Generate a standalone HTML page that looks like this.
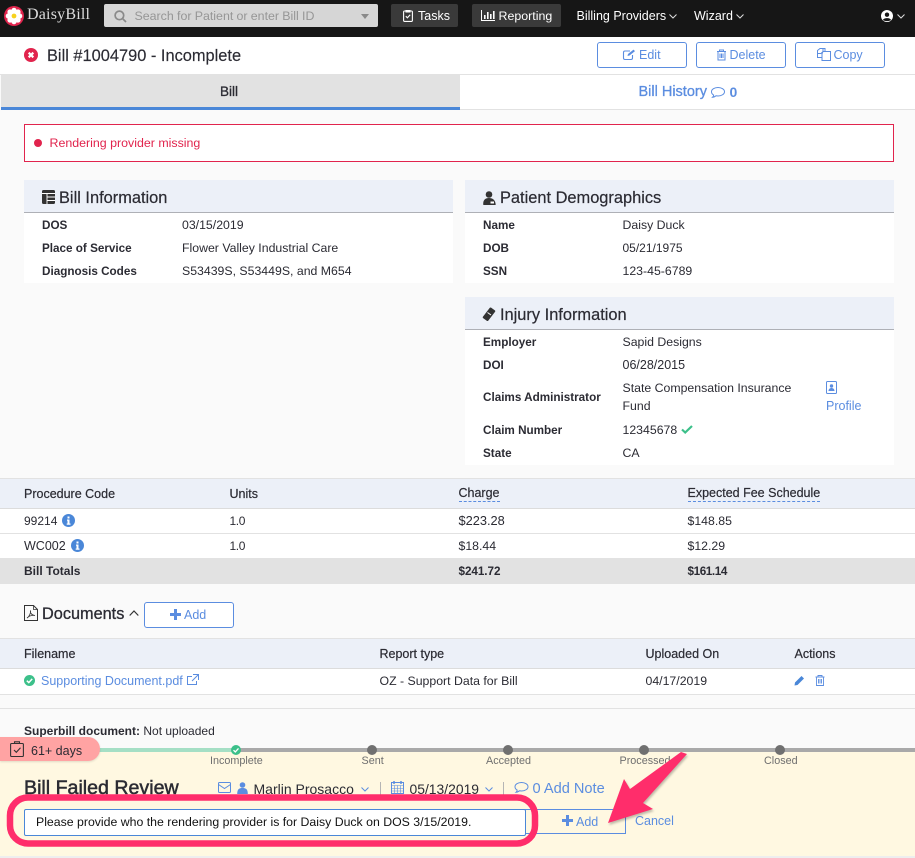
<!DOCTYPE html>
<html><head><meta charset="utf-8"><style>
html,body{margin:0;padding:0}
body{width:915px;height:858px;position:relative;overflow:hidden;background:#fafafa;font-family:"Liberation Sans",sans-serif;font-size:12.3px;color:#2b2b33}
.t{position:absolute;white-space:nowrap;line-height:16px}
.b{position:absolute}
.l{color:#5b8de0}
.btn{position:absolute;border:1px solid #5b8de0;border-radius:3px;box-sizing:border-box;color:#5b8de0;text-align:center;background:#fff}
svg{position:absolute;overflow:visible}
.h{font-size:16.4px;color:#2b2b33;-webkit-text-stroke:.2px #2b2b33}
.lb{font-weight:bold;font-size:11.7px;color:#2b2b33;margin-top:1px}
.th{font-size:12.5px;-webkit-text-stroke:.2px #2b2b33}
.st{font-size:10.8px;color:#6f6f6f}
</style></head><body>

<div class="b" style="left:0;top:0;width:915px;height:37px;background:#161616"></div>
<svg style="left:4px;top:6px" width="20" height="20" viewBox="0 0 20 20"><circle cx="10" cy="10" r="10" fill="#e1244d"/><g fill="#fff"><circle cx="10" cy="4.300" r="2.600"/><circle cx="14" cy="6" r="2.600"/><circle cx="15.700" cy="10" r="2.600"/><circle cx="14" cy="14" r="2.600"/><circle cx="10" cy="15.700" r="2.600"/><circle cx="6" cy="14" r="2.600"/><circle cx="4.300" cy="10" r="2.600"/><circle cx="6" cy="6" r="2.600"/><circle cx="10" cy="10" r="4"/></g><circle cx="10" cy="10" r="2.400" fill="#f7d21e"/></svg>
<div class="t" style="left:27px;top:7px;font-family:'Liberation Serif',serif;font-size:16px;color:#ddd;letter-spacing:.2px">DaisyBill</div>
<div class="b" style="left:104px;top:4px;width:274px;height:23px;background:#d6d6d6;border-radius:2px"></div>
<svg style="left:114px;top:10px" width="13" height="13" viewBox="0 0 13 13" fill="none" stroke="#8a8a8a" stroke-width="1.7"><circle cx="5.400" cy="5.400" r="4.300"/><path d="M8.500 8.500L12 12"/></svg>
<div class="t" style="left:134.500px;top:8px;color:#969696;font-size:12.400px;word-spacing:-.2px">Search for Patient or enter Bill ID</div>
<svg style="left:361px;top:14px" width="8" height="5"><path d="M0 0H8L4 5Z" fill="#8a8a8a"/></svg>
<div class="b" style="left:391px;top:4px;width:67px;height:23px;background:#3a3a3a;border-radius:2px"></div>
<svg style="left:403px;top:9px" width="10" height="13" viewBox="0 0 10 13" fill="none" stroke="#fff" stroke-width="1.100"><rect x=".6" y="2" width="8.800" height="10.400" rx="1"/><path d="M3 1.500h4v1.500h-4zM2.800 7.200l1.600 1.600 2.800-3"/></svg>
<div class="t" style="left:418px;top:8px;color:#fff;font-size:12.500px">Tasks</div>
<div class="b" style="left:472px;top:4px;width:89px;height:23px;background:#3a3a3a;border-radius:2px"></div>
<svg style="left:481px;top:10px" width="14" height="11" viewBox="0 0 14 11" fill="#fff"><path d="M0 0h1v10h13v1H0zM3 5h1.600v4H3zM6 2h1.600v7H6zM9 4h1.600v5H9zM12 1h1.600v8H12z"/></svg>
<div class="t" style="left:498.500px;top:8px;color:#fff;font-size:12.400px">Reporting</div>
<div class="t" style="left:576.500px;top:8px;color:#fff;font-size:12.500px">Billing Providers</div>
<svg style="left:669px;top:14px" width="8" height="5" fill="none" stroke="#ddd"><path d="M.5.500L4 4 7.500.500"/></svg>
<div class="t" style="left:694px;top:8px;color:#fff;font-size:12.500px">Wizard</div>
<svg style="left:736px;top:14px" width="8" height="5" fill="none" stroke="#ddd"><path d="M.5.500L4 4 7.500.500"/></svg>
<svg style="left:881px;top:10px" width="12" height="12" viewBox="0 0 12 12"><circle cx="6" cy="6" r="6" fill="#fff"/><circle cx="6" cy="4.700" r="2.200" fill="#161616"/><path d="M2 10c.7-2.500 7.300-2.500 8 0-2 1.500-6 1.500-8 0z" fill="#161616"/></svg>
<svg style="left:897px;top:14px" width="8" height="5" fill="none" stroke="#ddd"><path d="M.5.500L4 4 7.500.500"/></svg>

<div class="b" style="left:0;top:37px;width:915px;height:37px;background:#fff;border-bottom:1px solid #e2e2e2"></div>
<svg style="left:24px;top:48px" width="14" height="14" viewBox="0 0 14 14"><circle cx="7" cy="7" r="7" fill="#e1244d"/><path d="M4.700 4.700l4.600 4.600M9.300 4.700l-4.600 4.600" stroke="#fff" stroke-width="2.200"/></svg>
<div class="t" style="left:47px;top:48px;font-size:16.400px;color:#2b2b33;-webkit-text-stroke:.15px #2b2b33">Bill #1004790 - Incomplete</div>
<div class="btn" style="left:597px;top:42px;width:90px;height:26px"></div>
<div class="btn" style="left:696px;top:42px;width:90px;height:26px"></div>
<div class="btn" style="left:795px;top:42px;width:90px;height:26px"></div>
<svg style="left:623px;top:49px" width="13" height="11" viewBox="0 0 13 11" fill="none" stroke="#5b8de0" stroke-width="1.100"><path d="M9.500 6v3a1.500 1.500 0 0 1-1.500 1.500H2A1.500 1.500 0 0 1 .5 9V3.500A1.500 1.500 0 0 1 2 2h5"/><path d="M4.500 7l.5-2L10.500.6l1.500 1.500L6.500 6.500z" fill="#5b8de0" stroke="none"/></svg>
<div class="t" style="left:639px;top:47px;color:#5b8de0;font-size:12.500px">Edit</div>
<svg style="left:716px;top:49px" width="11" height="12" viewBox="0 0 11 12" fill="none" stroke="#5b8de0"><path d="M1 2.500h9M3.500 2.500V1h4v1.500M2 2.500v8.500h7V2.500M4 4.500V9M5.500 4.500V9M7 4.500V9"/></svg>
<div class="t" style="left:729.500px;top:47px;color:#5b8de0;font-size:12.500px">Delete</div>
<svg style="left:817px;top:48px" width="14" height="13" viewBox="0 0 14 13" fill="none" stroke="#5b8de0"><path d="M.5 2.500L3 .5h3v3l-2 2H.5zM.5 5.500V9.500h4M6 .5h2v3"/><path d="M6 3.500h7.500v9H5V6z"/></svg>
<div class="t" style="left:833.500px;top:47px;color:#5b8de0;font-size:12.500px">Copy</div>

<div class="b" style="left:1px;top:75px;width:459px;height:32px;background:#e2e2e2"></div>
<div class="b" style="left:1px;top:107px;width:459px;height:3px;background:#4a87d8"></div>
<div class="b" style="left:460px;top:75px;width:455px;height:34px;background:#fff;border-bottom:1px solid #e2e2e2"></div>
<div class="t" style="left:220px;top:84px;font-size:13.500px;-webkit-text-stroke:.3px #2b2b33">Bill</div>
<div class="t" style="left:638.500px;top:84px;font-size:14.500px;color:#5b8de0;-webkit-text-stroke:.3px #5b8de0">Bill History</div>
<svg style="left:711px;top:87px" width="14" height="12" viewBox="0 0 14 12" fill="none" stroke="#5b8de0"><path d="M7 .5c3.500 0 6.500 1.800 6.500 4.200S10.500 9 7 9c-.8 0-1.500-.1-2-.2-1 .8-2 1.300-3.500 1.500.7-.7 1.100-1.400 1.200-2.200C1.400 7.300.5 6.100.5 4.700.5 2.300 3.500.5 7 .5z"/></svg>
<div class="t" style="left:729.500px;top:84px;font-size:14px;color:#5b8de0;font-weight:bold">0</div>

<div class="b" style="left:24px;top:124px;width:870px;height:38px;box-sizing:border-box;background:#fff;border:1px solid #e1244d"></div>
<div class="b" style="left:34px;top:139px;width:8px;height:8px;border-radius:50%;background:#e1244d"></div>
<div class="t" style="left:49.500px;top:135px;color:#e1244d;font-size:12.400px">Rendering provider missing</div>

<div class="b" style="left:24px;top:180px;width:429px;height:103px;background:#fff"></div>
<div class="b" style="left:24px;top:180px;width:429px;height:33px;background:#ecf0f8;border-bottom:1px solid #aeb0b6;box-sizing:border-box"></div>
<svg style="left:41.500px;top:190px" width="14" height="14" viewBox="0 0 14 14"><rect width="13" height="14" rx="1.500" fill="#333"/><path d="M0 3.500h13M5 3.500V14M5 7h8M5 10.500h8" stroke="#fff" stroke-width=".9"/></svg>
<div class="t h" style="left:59px;top:190px">Bill Information</div>
<div class="t lb" style="left:42px;top:217px">DOS</div><div class="t" style="left:182px;top:217px">03/15/2019</div>
<div class="t lb" style="left:42px;top:240px">Place of Service</div><div class="t" style="left:182px;top:240px">Flower Valley Industrial Care</div>
<div class="t lb" style="left:42px;top:263px">Diagnosis Codes</div><div class="t" style="left:182px;top:263px">S53439S, S53449S, and M654</div>

<div class="b" style="left:465px;top:180px;width:429px;height:103px;background:#fff"></div>
<div class="b" style="left:465px;top:180px;width:429px;height:33px;box-sizing:border-box;background:#ecf0f8;border-bottom:1px solid #aeb0b6"></div>
<svg style="left:483px;top:191px" width="13" height="14" viewBox="0 0 13 14" fill="#333"><circle cx="6" cy="3.500" r="3.300"/><path d="M.3 14c-.6-5 2-7 5.700-7s6.500 2 6.700 7z"/><path d="M7.500 10.500h3.500v2h-3.500z" fill="#fff"/></svg>
<div class="t h" style="left:500px;top:190px">Patient Demographics</div>
<div class="t lb" style="left:483px;top:217px">Name</div><div class="t" style="left:622.500px;top:217px">Daisy Duck</div>
<div class="t lb" style="left:483px;top:240px">DOB</div><div class="t" style="left:622.500px;top:240px;font-size:12px">05/21/1975</div>
<div class="t lb" style="left:483px;top:263px">SSN</div><div class="t" style="left:622.500px;top:263px">123-45-6789</div>

<div class="b" style="left:465px;top:297px;width:429px;height:168px;background:#fff"></div>
<div class="b" style="left:465px;top:297px;width:429px;height:33px;box-sizing:border-box;background:#ecf0f8;border-bottom:1px solid #aeb0b6"></div>
<svg style="left:482px;top:307px" width="14" height="15" viewBox="0 0 14 15"><path d="M8.500 1.500l3.800 2.700L5.500 13 1.700 10.300z" fill="#333" stroke="#333" stroke-width="2" stroke-linejoin="round"/><path d="M5.500 5.500l3.500 2.500" stroke="#fff"/></svg>
<div class="t h" style="left:500px;top:307px">Injury Information</div>
<div class="t lb" style="left:483px;top:334px">Employer</div><div class="t" style="left:622.500px;top:334px">Sapid Designs</div>
<div class="t lb" style="left:483px;top:357px">DOI</div><div class="t" style="left:622.500px;top:357px;font-size:12.500px">06/28/2015</div>
<div class="t lb" style="left:483px;top:389px">Claims Administrator</div><div class="t" style="left:622.500px;top:380px">State Compensation Insurance</div><div class="t" style="left:622.500px;top:398px">Fund</div>
<svg style="left:826px;top:381px" width="12" height="13" viewBox="0 0 12 13"><rect x=".5" y=".5" width="10" height="12" rx="1" fill="#fff" stroke="#5b8de0"/><circle cx="5.500" cy="5" r="1.700" fill="#5b8de0"/><path d="M2.500 10c0-4 6-4 6 0z" fill="#5b8de0"/></svg>
<div class="t l" style="left:826px;top:398px;font-size:12.500px">Profile</div>
<div class="t lb" style="left:483px;top:422px">Claim Number</div><div class="t" style="left:622.500px;top:422px">12345678</div>
<svg style="left:681px;top:425px" width="12" height="9" viewBox="0 0 12 9"><path d="M1 4.500l3.200 3L11 1" fill="none" stroke="#3cc08a" stroke-width="2.200"/></svg>
<div class="t lb" style="left:483px;top:445px">State</div><div class="t" style="left:622.500px;top:445px">CA</div>

<div class="b" style="left:0;top:478px;width:915px;height:31px;box-sizing:border-box;background:#ecf0f8;border-top:1px solid #e2e2e2;border-bottom:1px solid #dcdcdc"></div>
<div class="t th" style="left:24px;top:486px">Procedure Code</div>
<div class="t th" style="left:229.500px;top:486px">Units</div>
<div class="t th" style="left:458.500px;top:486px;border-bottom:1px dashed #5b8de0;line-height:15px">Charge</div>
<div class="t th" style="left:687.500px;top:486px;border-bottom:1px dashed #5b8de0;line-height:15px">Expected Fee Schedule</div>
<div class="b" style="left:0;top:509px;width:915px;height:49px;background:#fff"></div>
<div class="b" style="left:0;top:533px;width:915px;height:1px;background:#e2e2e2"></div>
<div class="t" style="left:24px;top:513px;font-size:12px">99214</div>
<svg style="left:62px;top:514px" width="13" height="13" viewBox="0 0 13 13"><circle cx="6.500" cy="6.500" r="6.500" fill="#4a87d8"/><path d="M5.500 2.500h2v2h-2zM5 5.500h2.500v4h1v1.200H4.700V9.500h.8V6.700H5z" fill="#fff"/></svg>
<div class="t" style="left:229.500px;top:513px;font-size:12px;letter-spacing:-.4px">1.0</div><div class="t" style="left:458.500px;top:513px;font-size:12.800px">$223.28</div><div class="t" style="left:687.500px;top:513px">$148.85</div>
<div class="t" style="left:24px;top:538px;font-size:12.500px">WC002</div>
<svg style="left:70.500px;top:539px" width="13" height="13" viewBox="0 0 13 13"><circle cx="6.500" cy="6.500" r="6.500" fill="#4a87d8"/><path d="M5.500 2.500h2v2h-2zM5 5.500h2.500v4h1v1.200H4.700V9.500h.8V6.700H5z" fill="#fff"/></svg>
<div class="t" style="left:229.500px;top:538px;font-size:12px;letter-spacing:-.4px">1.0</div><div class="t" style="left:458.500px;top:538px">$18.44</div><div class="t" style="left:687.500px;top:538px">$12.29</div>
<div class="b" style="left:0;top:558px;width:915px;height:26px;background:#e2e2e2"></div>
<div class="t lb" style="left:24px;top:563px;font-size:12px;margin-top:0">Bill Totals</div>
<div class="t lb" style="left:458.500px;top:563px;letter-spacing:-.05px">$241.72</div>
<div class="t lb" style="left:687.500px;top:563px;letter-spacing:-.4px">$161.14</div>

<svg style="left:24px;top:605px" width="14" height="16" viewBox="0 0 14 16" fill="none" stroke="#333"><path d="M.5.500h9l4 4v11H.5z"/><path d="M9.500.5v4h4M3 13c2-1 4-5 3.500-7.500C6 8 8 10.500 11 10.500 8 10 5 11 3 13z" stroke-width=".8"/></svg>
<div class="t" style="left:42px;top:606px;font-size:16.300px;-webkit-text-stroke:.3px #2b2b33">Documents</div>
<svg style="left:129px;top:610px" width="10" height="6" fill="none" stroke="#333" stroke-width="1.200"><path d="M.7 5.500L5 1l4.300 4.500"/></svg>
<div class="btn" style="left:144px;top:602px;width:90px;height:26px"></div>
<svg style="left:170px;top:609px" width="11" height="11"><path d="M4 0h3v4h4v3H7v4H4V7H0V4h4z" fill="#5b8de0"/></svg>
<div class="t" style="left:184px;top:607px;color:#5b8de0;font-size:12.500px">Add</div>

<div class="b" style="left:0;top:638px;width:915px;height:31px;box-sizing:border-box;background:#ecf0f8;border-top:1px solid #e2e2e2;border-bottom:1px solid #dcdcdc"></div>
<div class="t th" style="left:24px;top:646px">Filename</div>
<div class="t th" style="left:379.500px;top:646px">Report type</div>
<div class="t th" style="left:645.500px;top:646px">Uploaded On</div>
<div class="t th" style="left:794.500px;top:646px">Actions</div>
<div class="b" style="left:0;top:669px;width:915px;height:25px;background:#fff;border-bottom:1px solid #e2e2e2"></div>
<div class="b" style="left:0;top:708px;width:915px;height:1px;background:#e2e2e2"></div>
<svg style="left:24px;top:675px" width="11" height="11" viewBox="0 0 11 11"><circle cx="5.500" cy="5.500" r="5.500" fill="#3cc08a"/><path d="M2.800 5.700l2 1.900 3.400-3.700" fill="none" stroke="#fff" stroke-width="1.500"/></svg>
<div class="t l" style="left:41px;top:673px;font-size:12.500px">Supporting Document.pdf</div>
<svg style="left:187px;top:674px" width="12" height="12" viewBox="0 0 12 12" fill="none" stroke="#5b8de0"><path d="M9.500 7v3.500h-9v-8H5M6 .5h5.500V6M11 1L5 7"/></svg>
<div class="t" style="left:379.500px;top:673px">OZ - Support Data for Bill</div>
<div class="t" style="left:645.500px;top:673px">04/17/2019</div>
<svg style="left:794px;top:675px" width="11" height="11" viewBox="0 0 11 11"><path d="M7.500 1l2.500 2.500-6.500 6.500L.5 10.500 1 7.500z" fill="#4a87d8"/></svg>
<svg style="left:815px;top:675px" width="10" height="11" viewBox="0 0 10 11" fill="none" stroke="#5b8de0" stroke-width=".9"><path d="M.5 2h9M3 2V.5h4V2M1.500 2v8.500h7V2M3.500 4v4.500M5 4v4.500M6.500 4v4.500"/></svg>

<div class="t" style="left:24px;top:723px;font-size:12px"><b>Superbill document:</b> Not uploaded</div>

<div class="b" style="left:0;top:751px;width:915px;height:105px;background:#fff8e1"></div>
<div class="b" style="left:0;top:856px;width:915px;height:2px;background:#eee"></div>
<div class="b" style="left:95px;top:748px;width:141px;height:4px;background:#a5dfc5"></div>
<div class="b" style="left:236px;top:748px;width:679px;height:4px;background:#a9a9a9"></div>
<div class="b" style="left:0;top:737px;width:100px;height:24px;background:#ffa3a3;border-radius:0 12px 12px 0;box-shadow:0 1px 2px rgba(0,0,0,.12)"></div>
<svg style="left:10px;top:741px" width="14" height="16" viewBox="0 0 14 16" fill="none" stroke="#333" stroke-width="1.100"><rect x=".6" y="2.500" width="12.800" height="13" rx="1"/><path d="M4.500 2.500V.8h5v1.700M4 9l2.300 2.300L10.500 6.800"/></svg>
<div class="t" style="left:31px;top:743px;color:#2b2b33;font-size:12.500px">61+ days</div>
<svg style="left:231px;top:745px" width="10" height="10" viewBox="0 0 10 10"><circle cx="5" cy="5" r="5" fill="#3cc08a"/><path d="M2.500 5.200l1.800 1.700 3.200-3.500" fill="none" stroke="#fff" stroke-width="1.300"/></svg>
<div class="b" style="left:367px;top:745px;width:10px;height:10px;border-radius:50%;background:#707070"></div>
<div class="b" style="left:503px;top:745px;width:10px;height:10px;border-radius:50%;background:#707070"></div>
<div class="b" style="left:639px;top:745px;width:10px;height:10px;border-radius:50%;background:#707070"></div>
<div class="b" style="left:775px;top:745px;width:10px;height:10px;border-radius:50%;background:#707070"></div>
<div class="t st" style="left:210px;top:753px">Incomplete</div>
<div class="t st" style="left:361.500px;top:753px">Sent</div>
<div class="t st" style="left:486px;top:753px">Accepted</div>
<div class="t st" style="left:619.500px;top:753px">Processed</div>
<div class="t st" style="left:764px;top:753px">Closed</div>

<div class="t" style="left:24px;top:778px;font-size:19.600px;line-height:20px;-webkit-text-stroke:.5px #2b2b33">Bill Failed Review</div>
<svg style="left:218px;top:782px" width="13" height="11" viewBox="0 0 13 11" fill="none" stroke="#5b8de0"><rect x=".5" y=".5" width="12" height="10" rx="1"/><path d="M.5 2.500l6 4 6-4"/></svg>
<svg style="left:237px;top:782px" width="11" height="12" viewBox="0 0 11 12" fill="#5b8de0"><circle cx="5.500" cy="3" r="2.800"/><path d="M.2 12c0-5 2-6 5.300-6s5.300 1 5.300 6z"/></svg>
<div class="t" style="left:253.500px;top:781px;font-size:14px">Marlin Prosacco</div>
<svg style="left:360.500px;top:787px" width="8" height="5" fill="none" stroke="#5b8de0"><path d="M.5.500L4 4 7.500.500"/></svg>
<div class="b" style="left:380px;top:782px;width:1px;height:13px;background:#b5b5b5"></div>
<svg style="left:391px;top:781px" width="13" height="13" viewBox="0 0 13 13" fill="none" stroke="#5b8de0"><rect x=".5" y="1.500" width="12" height="11"/><path d="M.5 4.500h12M.5 7.500h12M.5 10h12M3.500 4.500v8M6.500 4.500v8M9.500 4.500v8" stroke-width=".6"/><path d="M3 0v3M10 0v3" stroke-width="1.500"/></svg>
<div class="t" style="left:409.500px;top:780.500px;font-size:13.900px">05/13/2019</div>
<svg style="left:485px;top:787px" width="8" height="5" fill="none" stroke="#5b8de0"><path d="M.5.500L4 4 7.500.500"/></svg>
<div class="b" style="left:503px;top:782px;width:1px;height:13px;background:#b5b5b5"></div>
<svg style="left:514px;top:782px" width="15" height="12" viewBox="0 0 14 12" fill="none" stroke="#5b8de0"><path d="M7 .5c3.500 0 6.500 1.800 6.500 4.200S10.500 9 7 9c-.8 0-1.500-.1-2-.2-1 .8-2 1.300-3.500 1.500.7-.7 1.100-1.400 1.200-2.200C1.400 7.300.5 6.100.5 4.700.5 2.300 3.500.5 7 .5z"/></svg>
<div class="t" style="left:532.500px;top:780.500px;font-size:14.600px;color:#5b8de0">0 Add Note</div>

<div class="b" style="left:520px;top:809px;width:106px;height:25px;box-sizing:border-box;border:1px solid #5b8de0;background:#fff8e1"></div>
<svg style="left:562px;top:815px" width="11" height="11"><path d="M4 0h3v4h4v3H7v4H4V7H0V4h4z" fill="#5b8de0"/></svg>
<div class="t" style="left:576px;top:814px;color:#5b8de0;font-size:12.500px">Add</div>
<div class="t" style="left:635px;top:813px;color:#5b8de0;font-size:12.500px">Cancel</div>
<div class="b" style="left:24px;top:809px;width:502px;height:27px;box-sizing:border-box;background:#fff;border:1px solid #4a87d8;border-radius:2px"></div>
<div class="t" style="left:36px;top:814px;color:#111;font-size:12.300px">Please provide who the rendering provider is for Daisy Duck on DOS 3/15/2019.</div>

<svg style="left:0;top:0" width="915" height="858">
<rect x="10" y="797.500" width="525" height="46" rx="18" fill="none" stroke="#ff2d6b" stroke-width="6.500"/>
<path d="M681 752L687 754 643 803 653 809 608 823 624 779 630 789Z" fill="#ff2d6b" style="filter:drop-shadow(1px 2px 1px rgba(0,0,0,.25))"/>
</svg>
</body></html>
